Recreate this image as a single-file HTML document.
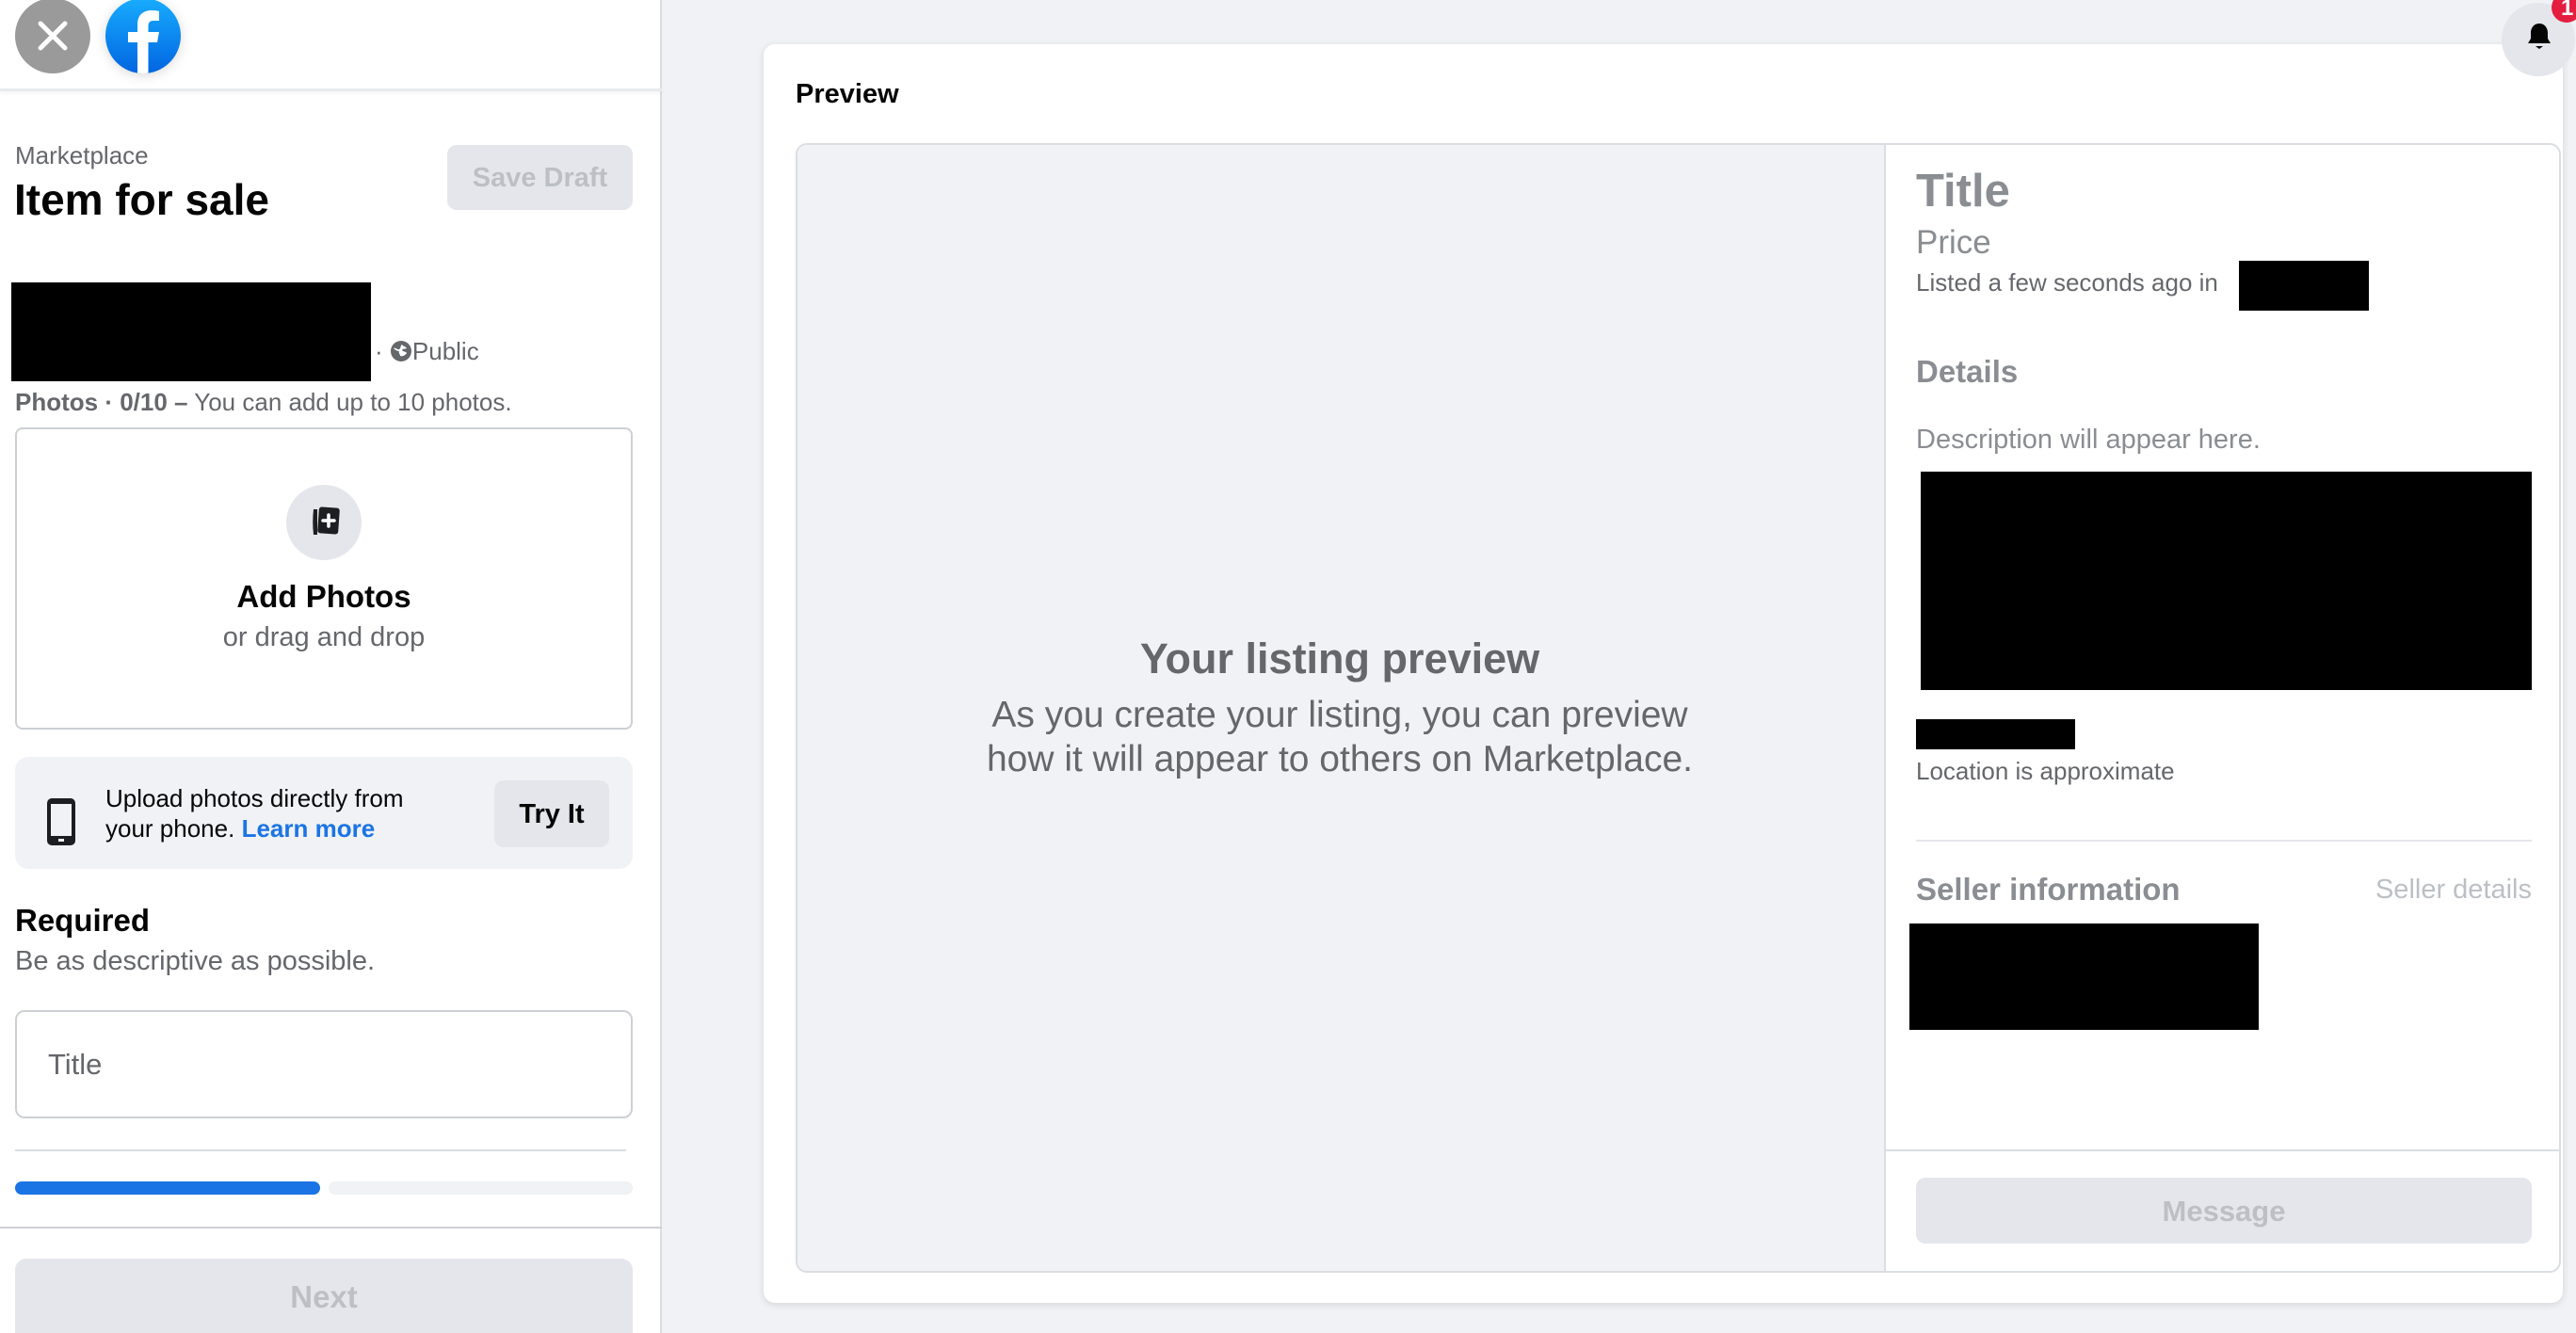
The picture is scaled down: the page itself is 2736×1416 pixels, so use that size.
<!DOCTYPE html>
<html><head><meta charset="utf-8"><style>
*{margin:0;padding:0;box-sizing:border-box}
html,body{width:2736px;height:1416px;overflow:hidden}
body{background:#f0f2f5;font-family:"Liberation Sans",Arial,sans-serif;position:relative;color:#050505}
.a{position:absolute;white-space:nowrap;line-height:1.2}
.blk{position:absolute;background:#000}
</style></head><body>
<div style="position:absolute;left:0;top:0;width:703px;height:1416px;background:#fff;border-right:2px solid #dadde1"></div>
<div style="position:absolute;left:0;top:94px;width:703px;height:3px;background:#e9eaed;box-shadow:0 2px 4px rgba(0,0,0,.06)"></div>
<div style="position:absolute;left:16px;top:-2px;width:80px;height:80px;border-radius:50%;background:#9a9a9a"></div>
<svg class="a" style="left:16px;top:-2px" width="80" height="80" viewBox="0 0 80 80"><path d="M27 27L53 53M53 27L27 53" stroke="#fff" stroke-width="5" stroke-linecap="round"/></svg>
<svg class="a" style="left:112px;top:-2px;filter:drop-shadow(0 2px 6px rgba(0,0,0,.15))" width="80" height="80" viewBox="0 0 80 80"><defs><linearGradient id="g" x1="0" y1="0" x2="0" y2="1"><stop offset="0" stop-color="#18acfe"/><stop offset="1" stop-color="#0165e1"/></linearGradient><clipPath id="c"><circle cx="40" cy="40" r="40"/></clipPath></defs><circle cx="40" cy="40" r="40" fill="url(#g)"/><path clip-path="url(#c)" d="M34 80V47H24V36H34V28C34 18 40 13 49 13C53 13 56 13.5 57 14V24H51C47 24 45.5 26 45.5 30V36H57L55 47H45.5V80Z" fill="#fff"/></svg>

<div class="a" style="left:16px;top:150px;font-size:26px;color:#65676b">Marketplace</div>
<div class="a" style="left:15px;top:185px;font-size:46px;font-weight:bold">Item for sale</div>
<div class="a" style="left:475px;top:154px;width:197px;height:69px;border-radius:10px;background:#e4e6eb;color:#bcc0c4;font-size:29px;font-weight:bold;text-align:center;line-height:71px">Save Draft</div>

<div class="blk" style="left:12px;top:300px;width:382px;height:105px"></div>
<div class="a" style="left:398px;top:358px;font-size:26px;color:#65676b">· <svg width="24" height="24" viewBox="0 0 24 24" style="vertical-align:-3px"><circle cx="12" cy="12" r="11" fill="#65676b"/><path d="M4 9c3-1 4 2 6 1s1-4 3-5c1 2 4 2 5 4-2 1-4 0-5 2 1 2 4 1 5 3-2 3-5 4-7 3 0-2-2-3-1-5-2 0-4-1-6-3z" fill="#fff"/></svg>Public</div>
<div class="a" style="left:16px;top:412px;font-size:26px;color:#65676b"><b>Photos · 0/10 –</b> You can add up to 10 photos.</div>

<div style="position:absolute;left:16px;top:454px;width:656px;height:321px;border:2px solid #ccd0d5;border-radius:8px"></div>
<div style="position:absolute;left:304px;top:515px;width:80px;height:80px;border-radius:50%;background:#e4e6eb"></div>
<svg class="a" style="left:324px;top:535px" width="40" height="40" viewBox="0 0 40 40"><path d="M9 6h4v27h-4c-1-9-1-18 0-27z" fill="#1c1e21"/><rect x="14" y="4" width="22" height="28" rx="3" fill="#1c1e21" transform="rotate(4 25 18)"/><path d="M25 12v12M19 18h12" stroke="#fff" stroke-width="3.5" stroke-linecap="round"/></svg>
<div class="a" style="left:16px;top:614px;width:656px;text-align:center;font-size:33px;font-weight:bold">Add Photos</div>
<div class="a" style="left:16px;top:660px;width:656px;text-align:center;font-size:29px;color:#65676b">or drag and drop</div>

<div style="position:absolute;left:16px;top:804px;width:656px;height:119px;border-radius:14px;background:#f0f2f5"></div>
<svg class="a" style="left:48px;top:846px" width="34" height="54" viewBox="0 0 34 54"><rect x="2" y="2" width="30" height="50" rx="5" fill="#1c1e21"/><rect x="6" y="8" width="22" height="34" fill="#f0f2f5"/><rect x="14" y="45" width="6" height="3" fill="#f0f2f5"/></svg>
<div class="a" style="left:112px;top:832px;font-size:26px;line-height:32px">Upload photos directly from<br>your phone. <span style="color:#1b74e4;font-weight:bold">Learn more</span></div>
<div class="a" style="left:525px;top:829px;width:122px;height:71px;border-radius:10px;background:#e4e6eb;font-size:29px;font-weight:bold;text-align:center;line-height:73px">Try It</div>

<div class="a" style="left:16px;top:958px;font-size:33px;font-weight:bold">Required</div>
<div class="a" style="left:16px;top:1004px;font-size:29px;color:#65676b">Be as descriptive as possible.</div>
<div style="position:absolute;left:16px;top:1073px;width:656px;height:115px;border:2px solid #ccd0d5;border-radius:10px"></div>
<div class="a" style="left:51px;top:1112px;font-size:31px;color:#65676b">Title</div>
<div style="position:absolute;left:16px;top:1221px;width:649px;height:2px;background:#dadde1"></div>
<div style="position:absolute;left:16px;top:1255px;width:324px;height:14px;border-radius:7px;background:#1b74e4"></div>
<div style="position:absolute;left:349px;top:1255px;width:323px;height:14px;border-radius:7px;background:#f0f2f5"></div>
<div style="position:absolute;left:0;top:1303px;width:703px;height:2px;background:#ced0d4"></div>
<div class="a" style="left:16px;top:1337px;width:656px;height:79px;border-radius:12px 12px 0 0;background:#e4e6eb;color:#bcc0c4;font-size:33px;font-weight:bold;text-align:center;line-height:82px">Next</div>

<div style="position:absolute;left:811px;top:47px;width:1911px;height:1337px;background:#fff;border-radius:12px;box-shadow:0 2px 8px rgba(0,0,0,.12)"></div>
<div class="a" style="left:845px;top:83px;font-size:29px;font-weight:bold">Preview</div>
<div style="position:absolute;left:845px;top:152px;width:1875px;height:1200px;border:2px solid #dadde1;border-radius:12px;overflow:hidden">
  <div style="position:absolute;left:0;top:0;width:1156px;height:1200px;background:#f0f2f5;border-right:2px solid #dadde1"></div>
</div>
<div class="a" style="left:845px;top:673px;width:1156px;text-align:center;font-size:45px;font-weight:bold;color:#65676b">Your listing preview</div>
<div class="a" style="left:845px;top:736px;width:1156px;text-align:center;font-size:39px;line-height:47px;color:#65676b">As you create your listing, you can preview<br>how it will appear to others on Marketplace.</div>

<div class="a" style="left:2035px;top:174px;font-size:49px;font-weight:bold;color:#8a8d91">Title</div>
<div class="a" style="left:2035px;top:237px;font-size:35px;color:#8a8d91">Price</div>
<div class="a" style="left:2035px;top:285px;font-size:26px;color:#65676b">Listed a few seconds ago in</div>
<div class="blk" style="left:2378px;top:277px;width:138px;height:53px"></div>
<div class="a" style="left:2035px;top:375px;font-size:33px;font-weight:bold;color:#8a8d91">Details</div>
<div class="a" style="left:2035px;top:450px;font-size:29px;color:#8a8d91">Description will appear here.</div>
<div class="blk" style="left:2040px;top:501px;width:649px;height:232px"></div>
<div class="blk" style="left:2035px;top:764px;width:169px;height:32px"></div>
<div class="a" style="left:2035px;top:804px;font-size:26px;color:#65676b">Location is approximate</div>
<div style="position:absolute;left:2035px;top:892px;width:654px;height:2px;background:#e4e6eb"></div>
<div class="a" style="left:2035px;top:925px;font-size:33px;font-weight:bold;color:#8a8d91">Seller information</div>
<div class="a" style="left:2400px;top:928px;width:289px;text-align:right;font-size:29px;color:#bcc0c4">Seller details</div>
<div class="blk" style="left:2028px;top:981px;width:371px;height:113px"></div>
<div style="position:absolute;left:2001px;top:1221px;width:719px;height:2px;background:#dadde1"></div>
<div class="a" style="left:2035px;top:1251px;width:654px;height:70px;border-radius:10px;background:#e4e6eb;color:#bcc0c4;font-size:31px;font-weight:600;text-align:center;line-height:72px">Message</div>

<div style="position:absolute;left:2657px;top:3px;width:78px;height:78px;border-radius:50%;background:#e4e6eb"></div>
<svg class="a" style="left:2680px;top:22px" width="34" height="34" viewBox="0 0 34 34"><path d="M17 3c-6 0-9 5-9 10v6l-3 5h24l-3-5v-6c0-5-3-10-9-10z" fill="#050505"/><path d="M13 27h8l-4 3z" fill="#050505"/></svg>
<div style="position:absolute;left:2710px;top:-8px;width:32px;height:32px;border-radius:50%;background:#e41e3f;color:#fff;font-size:24px;font-weight:bold;line-height:34px;padding-left:10px">1</div>
</body></html>
